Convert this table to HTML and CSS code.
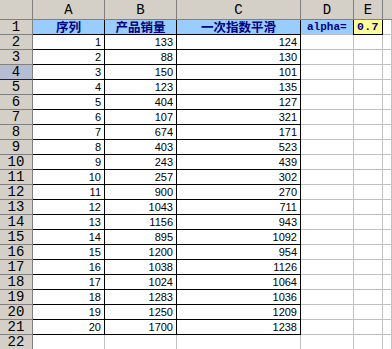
FILE: index.html
```html
<!DOCTYPE html>
<html>
<head>
<meta charset="utf-8">
<link rel="stylesheet" href="styles.css">
</head>
<body>
<div class="sheet">
  <div class="ch corner"></div><div class="ch">A</div><div class="ch">B</div><div class="ch">C</div><div class="ch">D</div><div class="ch">E</div><div class="ch edge"></div>

  <div class="rh">1</div><div class="d t">序列</div><div class="d t">产品销量</div><div class="d t">一次指数平滑</div><div class="c lbl">alpha=</div><div class="c val">0.7</div><div class="c"></div>
  <div class="rh">2</div><div class="d">1</div><div class="d">133</div><div class="d">124</div><div class="c"></div><div class="c"></div><div class="c"></div>
  <div class="rh">3</div><div class="d">2</div><div class="d">88</div><div class="d">130</div><div class="c"></div><div class="c"></div><div class="c"></div>
  <div class="rh sel">4</div><div class="d">3</div><div class="d">150</div><div class="d">101</div><div class="c"></div><div class="c"></div><div class="c"></div>
  <div class="rh">5</div><div class="d">4</div><div class="d">123</div><div class="d">135</div><div class="c"></div><div class="c"></div><div class="c"></div>
  <div class="rh">6</div><div class="d">5</div><div class="d">404</div><div class="d">127</div><div class="c"></div><div class="c"></div><div class="c"></div>
  <div class="rh">7</div><div class="d">6</div><div class="d">107</div><div class="d">321</div><div class="c"></div><div class="c"></div><div class="c"></div>
  <div class="rh">8</div><div class="d">7</div><div class="d">674</div><div class="d">171</div><div class="c"></div><div class="c"></div><div class="c"></div>
  <div class="rh">9</div><div class="d">8</div><div class="d">403</div><div class="d">523</div><div class="c"></div><div class="c"></div><div class="c"></div>
  <div class="rh">10</div><div class="d">9</div><div class="d">243</div><div class="d">439</div><div class="c"></div><div class="c"></div><div class="c"></div>
  <div class="rh">11</div><div class="d">10</div><div class="d">257</div><div class="d">302</div><div class="c"></div><div class="c"></div><div class="c"></div>
  <div class="rh">12</div><div class="d">11</div><div class="d">900</div><div class="d">270</div><div class="c"></div><div class="c"></div><div class="c"></div>
  <div class="rh">13</div><div class="d">12</div><div class="d">1043</div><div class="d">711</div><div class="c"></div><div class="c"></div><div class="c"></div>
  <div class="rh">14</div><div class="d">13</div><div class="d">1156</div><div class="d">943</div><div class="c"></div><div class="c"></div><div class="c"></div>
  <div class="rh">15</div><div class="d">14</div><div class="d">895</div><div class="d">1092</div><div class="c"></div><div class="c"></div><div class="c"></div>
  <div class="rh">16</div><div class="d">15</div><div class="d">1200</div><div class="d">954</div><div class="c"></div><div class="c"></div><div class="c"></div>
  <div class="rh">17</div><div class="d">16</div><div class="d">1038</div><div class="d">1126</div><div class="c"></div><div class="c"></div><div class="c"></div>
  <div class="rh">18</div><div class="d">17</div><div class="d">1024</div><div class="d">1064</div><div class="c"></div><div class="c"></div><div class="c"></div>
  <div class="rh">19</div><div class="d">18</div><div class="d">1283</div><div class="d">1036</div><div class="c"></div><div class="c"></div><div class="c"></div>
  <div class="rh">20</div><div class="d">19</div><div class="d">1250</div><div class="d">1209</div><div class="c"></div><div class="c"></div><div class="c"></div>
  <div class="rh">21</div><div class="d">20</div><div class="d">1700</div><div class="d">1238</div><div class="c"></div><div class="c"></div><div class="c"></div>
  <div class="rh">22</div><div class="c"></div><div class="c"></div><div class="c"></div><div class="c"></div><div class="c"></div><div class="c"></div>
</div>
</body>
</html>
```

FILE: styles.css
```css
html, body {
  margin: 0;
  padding: 0;
  background: #ffffff;
  overflow: hidden;
}

.sheet {
  display: grid;
  grid-template-columns: 33px 72px 72px 124px 53px 29px 1fr;
  grid-template-rows: 20px repeat(22, 15px);
  width: 392px;
  font-family: "Liberation Sans", Arial, sans-serif;
}

.sheet > div {
  box-sizing: border-box;
  border-right: 1px solid #c0c0c0;
  border-bottom: 1px solid #c0c0c0;
  overflow: hidden;
  white-space: nowrap;
  display: flex;
}

.ch {
  background: #d4d0c8;
  border-right-color: #808080 !important;
  border-bottom-color: #808080 !important;
  justify-content: center;
  align-items: center;
  font-family: "Liberation Mono", "Courier New", monospace;
  font-size: 14px;
  line-height: 18px;
  color: #000;
}

.ch.edge {
  border-right: none !important;
}

.rh {
  background: #d4d0c8;
  border-right-color: #808080 !important;
  border-bottom-color: #808080 !important;
  justify-content: center;
  align-items: center;
  font-family: "Liberation Mono", "Courier New", monospace;
  font-size: 14px;
  line-height: 14px;
  color: #000;
}

.rh.sel {
  background: #b6bdd2;
  border-bottom-color: #0a246a !important;
}

.d {
  border-right-color: #000 !important;
  border-bottom-color: #000 !important;
  justify-content: flex-end;
  align-items: flex-end;
  padding-right: 3px;
  font-size: 11px;
  line-height: 13px;
  color: #000;
}

.t {
  background: #99ccff;
  justify-content: center;
  align-items: center;
  padding-right: 0;
  font-family: "Noto Sans CJK SC", sans-serif;
  font-weight: bold;
  font-size: 12.5px;
  line-height: 14px;
  color: #000080;
}

.lbl {
  background: #99ccff;
  align-items: center;
  padding-left: 6px;
  font-family: "Liberation Mono", "Courier New", monospace;
  font-weight: bold;
  font-size: 11px;
  line-height: 14px;
  color: #000080;
}

.val {
  background: #ffff99;
  border-right-color: #000 !important;
  border-bottom-color: #000 !important;
  border-left: 1px solid #000;
  margin-left: -1px;
  align-items: center;
  padding-left: 3px;
  font-family: "Liberation Mono", "Courier New", monospace;
  font-weight: bold;
  font-size: 11.5px;
  letter-spacing: 0.3px;
  line-height: 14px;
  color: #000080;
}
```
